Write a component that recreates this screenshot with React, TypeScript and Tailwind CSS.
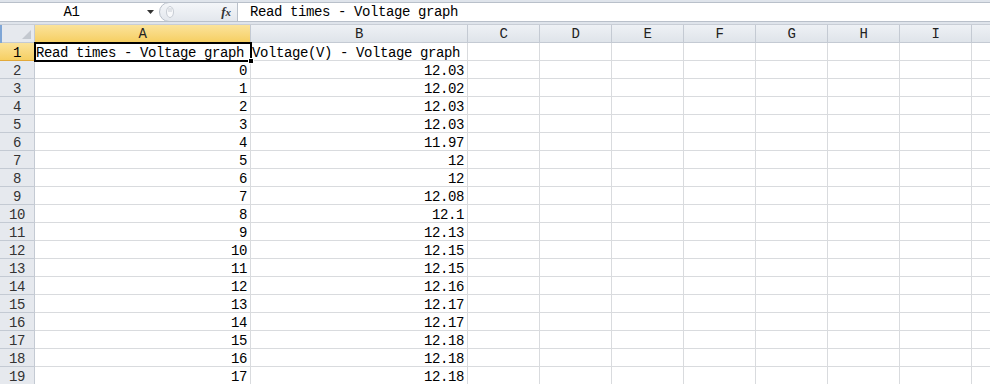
import React from "react";

// Column letters after the first two wide columns
const NARROW_COLS = ["C", "D", "E", "F", "G", "H", "I"];

const VOLTAGES = [
  "12.03", "12.02", "12.03", "12.03", "11.97", "12", "12", "12.08", "12.1",
  "12.13", "12.15", "12.15", "12.16", "12.17", "12.17", "12.18", "12.18", "12.18",
];

const FONT = "font-['Liberation_Mono','DejaVu_Sans_Mono',monospace] text-[14px] tracking-[-0.4px]";

function HeaderCell({ label, width, selected }: { label: string; width: string; selected?: boolean }) {
  return (
    <div
      className={`${width} h-[18px] shrink-0 border-r border-b border-[#c4cad3] text-center leading-[19px] text-[#222] ${
        selected ? "bg-gradient-to-b from-[#fbe39a] to-[#f6cf62] border-b-[#e2a93a]" : "bg-gradient-to-b from-[#eef1f5] to-[#dfe4ea]"
      }`}
    >
      {label}
    </div>
  );
}

function Row({ n, a, b }: { n: number; a: string; b: string }) {
  const active = n === 1;
  return (
    <div className="flex h-[18px]">
      <div
        className={`w-[35px] shrink-0 border-r border-b text-center leading-[20px] ${
          active
            ? "bg-gradient-to-b from-[#fbe39a] to-[#f6cf62] border-[#e2a93a] text-black"
            : "bg-[#e6e9ee] border-[#c4cad3] text-[#333]"
        }`}
      >
        {n}
      </div>
      <div className={`w-[216px] shrink-0 border-r border-b border-[#d9dbde] leading-[20px] whitespace-nowrap ${active ? "pl-[1px]" : "text-right pr-[3px]"}`}>
        {a}
      </div>
      <div className={`w-[217px] shrink-0 border-r border-b border-[#d9dbde] leading-[20px] whitespace-nowrap ${active ? "pl-[1px]" : "text-right pr-[3px]"}`}>
        {b}
      </div>
      {NARROW_COLS.map((c) => (
        <div key={c} className="w-[72px] shrink-0 border-r border-b border-[#d9dbde]" />
      ))}
      <div className="flex-1 border-b border-[#d9dbde]" />
    </div>
  );
}

export default function App() {
  const rows = [
    { a: "Read times - Voltage graph", b: "Voltage(V) - Voltage graph" },
    ...VOLTAGES.map((v, i) => ({ a: String(i), b: v })),
  ];

  return (
    <div className={`w-[990px] h-[384px] overflow-hidden bg-white text-black ${FONT}`}>
      {/* Formula bar */}
      <div className="h-[25px] bg-[#dfe4eb] pt-[2px] border-b border-[#c9ced6]">
        <div className="flex h-[20px] bg-white border-y border-[#b9c0ca]">
          <div className="relative w-[159px] shrink-0 text-center leading-[19px]">
            <span className="pr-[16px]">A1</span>
            <svg className="absolute right-[4px] top-[7px]" width="8" height="5" viewBox="0 0 8 5">
              <path d="M0 0h7L3.5 4z" fill="#333" />
            </svg>
          </div>
          <div className="flex w-[79px] shrink-0 items-center rounded-l-[10px] border border-[#b9c0ca] bg-gradient-to-b from-[#f4f6f9] to-[#e3e7ed] -my-[1px]">
            <svg className="ml-[5px]" width="10" height="14" viewBox="0 0 10 14">
              <ellipse cx="5" cy="7" rx="3.5" ry="5.5" fill="#f8f9fb" stroke="#c7ccd4" />
              <path d="M3 4h4M3 6h4" stroke="#c7ccd4" />
            </svg>
            <span className="ml-auto mr-[6px] font-['Liberation_Serif',serif] italic font-bold text-[13px] tracking-normal text-[#333]">
              f<span className="text-[11px]">x</span>
            </span>
          </div>
          <div className="flex-1 pl-[12px] leading-[19px] whitespace-nowrap">Read times - Voltage graph</div>
        </div>
      </div>

      {/* Sheet */}
      <div className="relative border-l-2 border-[#7fa6d6]">
        <div className="flex h-[18px]">
          <div className="relative w-[33px] shrink-0 border-r border-b border-[#c4cad3] bg-[#e6e9ee]">
            <svg className="absolute right-[3px] bottom-[3px]" width="9" height="9" viewBox="0 0 9 9">
              <path d="M9 0v9H0z" fill="#c3c8cf" />
            </svg>
          </div>
          <HeaderCell label="A" width="w-[216px]" selected />
          <HeaderCell label="B" width="w-[217px]" />
          {NARROW_COLS.map((c) => (
            <HeaderCell key={c} label={c} width="w-[72px]" />
          ))}
          <div className="flex-1 h-[18px] border-b border-[#c4cad3] bg-gradient-to-b from-[#eef1f5] to-[#dfe4ea]" />
        </div>
        <div className="-ml-[2px]">
          {rows.map((r, i) => (
            <Row key={i} n={i + 1} a={r.a} b={r.b} />
          ))}
        </div>

        {/* Active cell A1 outline + fill handle */}
        <div className="pointer-events-none absolute left-[32px] top-[17px] w-[218px] h-[20px] border-2 border-black" />
        <div className="pointer-events-none absolute left-[246px] top-[33px] w-[6px] h-[6px] bg-black border border-white" />
      </div>
    </div>
  );
}
